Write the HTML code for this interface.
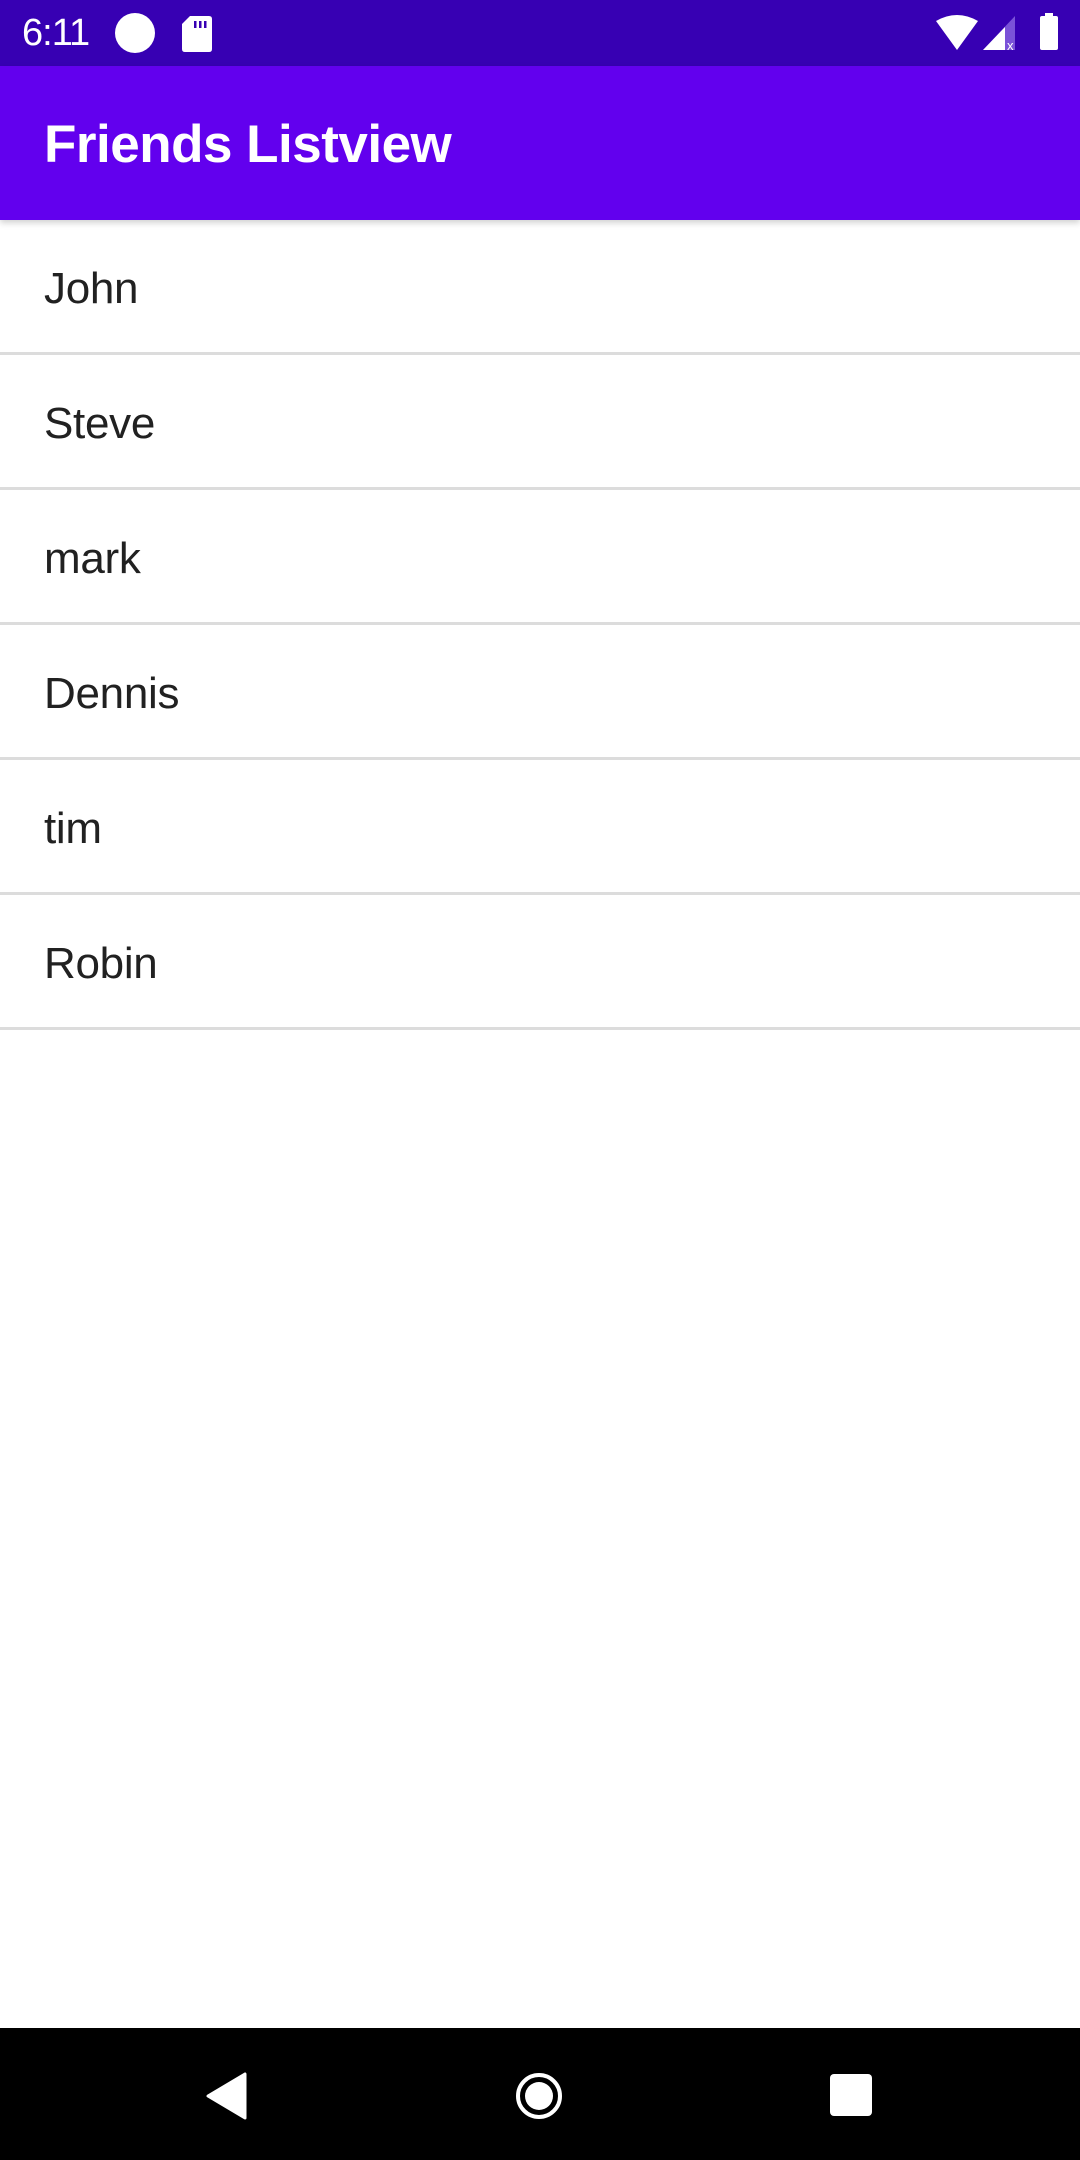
<!DOCTYPE html>
<html><head><style>
html,body{margin:0;padding:0;width:1080px;height:2160px;overflow:hidden;background:#fff;font-family:"Liberation Sans",sans-serif;}
.sb{position:absolute;top:0;left:0;width:1080px;height:66px;background:#3700b3;color:#fff;}
.ab{position:absolute;top:66px;left:0;width:1080px;height:154px;background:#6200ee;color:#fff;box-shadow:0 3px 6px rgba(0,0,0,0.18);}
.ab span{position:absolute;left:44px;top:48px;font-size:53px;font-weight:bold;letter-spacing:-0.5px;}
.row{position:absolute;left:0;width:1080px;height:135px;border-bottom:3px solid #dcdcdc;box-sizing:border-box;}
.row span{position:absolute;left:44px;top:44px;font-size:44px;color:#212121;letter-spacing:-0.3px;}
.nav{position:absolute;left:0;top:2028px;width:1080px;height:132px;background:#000;}
</style></head><body>
<div class="sb">
 <span style="position:absolute;left:22px;top:12px;font-size:38px;letter-spacing:-1px;">6:11</span>
 <div style="position:absolute;left:115px;top:13px;width:40px;height:40px;border-radius:50%;background:#fff;"></div>
 <svg style="position:absolute;left:182px;top:16px" width="30" height="36" viewBox="0 0 30 36"><path d="M8 0H27Q30 0 30 3V33Q30 36 27 36H3Q0 36 0 33V8Z" fill="#fff"/><rect x="12" y="5" width="2.5" height="7" fill="#3700b3"/><rect x="17" y="5" width="2.5" height="7" fill="#3700b3"/><rect x="22" y="5" width="2.5" height="7" fill="#3700b3"/></svg>
 <svg style="position:absolute;left:936px;top:15px" width="44" height="36" viewBox="0 0 44 36"><path d="M0 6Q21 -6 42 6L21 35Z" fill="#fff"/></svg>
 <svg style="position:absolute;left:983px;top:16px" width="36" height="34" viewBox="0 0 36 34"><path d="M32 0V34H0Z" fill="#7a52d8"/><path d="M22 11V34H0Z" fill="#fff"/><text x="24" y="34" font-size="13" fill="#fff" font-family="Liberation Sans">x</text></svg>
 <div style="position:absolute;left:1040px;top:16px;width:18px;height:34px;background:#fff;border-radius:2px;"></div>
 <div style="position:absolute;left:1045px;top:13px;width:8px;height:4px;background:#fff;"></div>
</div>
<div class="ab"><span>Friends Listview</span></div>
<div class="row" style="top:220px"><span>John</span></div>
<div class="row" style="top:355px"><span>Steve</span></div>
<div class="row" style="top:490px"><span>mark</span></div>
<div class="row" style="top:625px"><span>Dennis</span></div>
<div class="row" style="top:760px"><span>tim</span></div>
<div class="row" style="top:895px"><span>Robin</span></div>
<div class="nav">
 <svg style="position:absolute;left:205px;top:44px" width="42" height="48" viewBox="0 0 42 48"><path d="M40 2V46L3 24Z" fill="#fff" stroke="#fff" stroke-width="3" stroke-linejoin="round"/></svg>
 <div style="position:absolute;left:516px;top:45px;width:46px;height:46px;border:4px solid #fff;border-radius:50%;box-sizing:border-box;"></div>
 <div style="position:absolute;left:525px;top:54px;width:28px;height:28px;background:#fff;border-radius:50%;"></div>
 <div style="position:absolute;left:830px;top:46px;width:42px;height:42px;background:#fff;border-radius:4px;"></div>
</div>
</body></html>
